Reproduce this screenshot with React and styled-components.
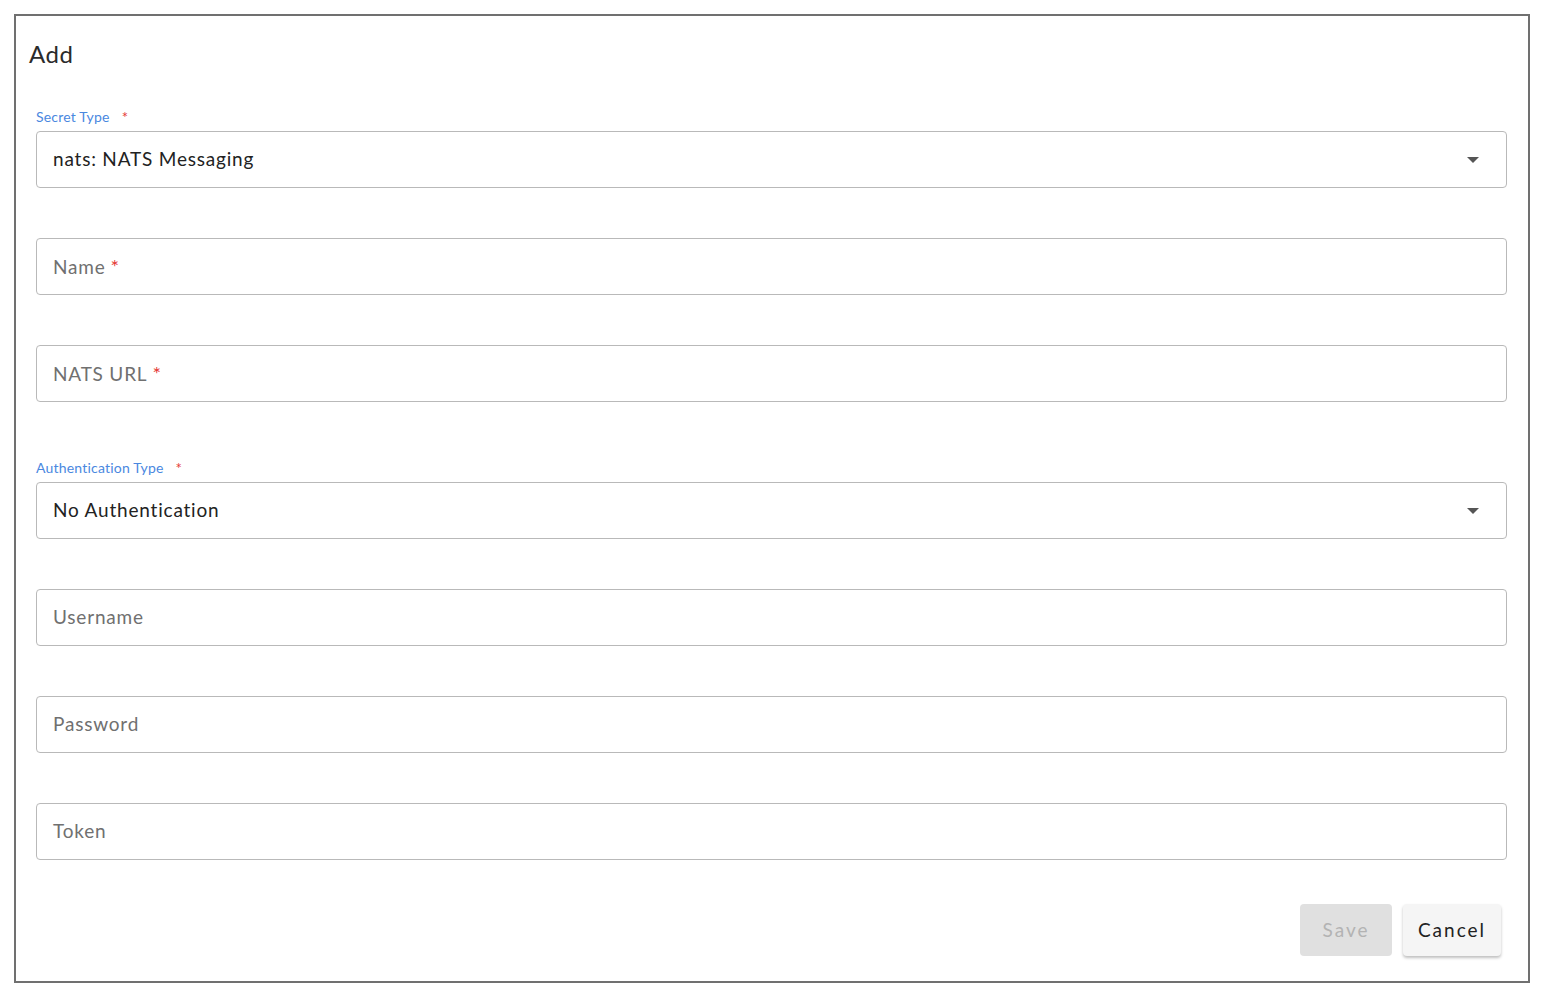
import styled, { createGlobalStyle } from 'styled-components';

const GlobalStyle = createGlobalStyle`
    body {
        margin: 0;
        background: #ffffff;
        font-family: Lato, "Open Sans", sans-serif;
    }
`

const Frame = styled.div`
    margin: 14px 0 0 14px;
    width: 1516px;
    height: 969px;
    box-sizing: border-box;
    border: 2px solid #707070;
    background: #ffffff;
    display: flex;
    flex-direction: column;
`

const Title = styled.h2`
    margin: 23px 0 0 13px;
    font-size: 24px;
    line-height: 30px;
    font-weight: 400;
    letter-spacing: 0.6px;
    color: #2b2b2b;
`

const Form = styled.div`
    display: flex;
    flex-direction: column;
    gap: 50px;
    padding: 32px 21px 0 20px;
`

const Group = styled.div`
    display: flex;
    flex-direction: column;
`

const Label = styled.div`
    margin: 7px 0 5px;
    font-size: 14px;
    line-height: 18px;
    letter-spacing: 0.2px;
    color: #4a88df;
    display: flex;
    gap: 12px;
`

const Star = styled.span`
    color: #e53935;
    font-size: ${p => p.$tight ? '20px' : '15px'};
    margin-left: ${p => p.$tight ? '5px' : '0'};
`

const Box = styled.div`
    height: 57px;
    box-sizing: border-box;
    border: 1px solid #b9b9b9;
    border-radius: 4px;
    display: flex;
    align-items: center;
    justify-content: space-between;
    padding: 0 27px 2px 16px;
    font-size: 19px;
    letter-spacing: 0.8px;
    color: ${p => p.$placeholder ? '#707070' : '#222222'};
`

const Arrow = styled.span`
    width: 0;
    height: 0;
    margin-top: 2px;
    border-left: 6px solid transparent;
    border-right: 6px solid transparent;
    border-top: 6px solid #555555;
`

const Actions = styled.div`
    display: flex;
    justify-content: flex-end;
    gap: 11px;
    padding: 44px 27px 0 0;
`

const Button = styled.button`
    height: 52px;
    min-width: ${p => p.$w}px;
    border: none;
    border-radius: 4px;
    padding: 0 0 2px;
    font-family: inherit;
    font-size: 19px;
    letter-spacing: 2px;
    background: ${p => p.disabled ? '#e0e0e0' : '#f5f5f5'};
    color: ${p => p.disabled ? '#b3b3b3' : '#222222'};
    box-shadow: ${p => p.disabled ? 'none' : '0 2px 3px rgba(0,0,0,0.25)'};
    cursor: pointer;
`

const Select = ({ label, value }) => (
    <Group>
        <Label>{label}<Star>*</Star></Label>
        <Box>{value}<Arrow /></Box>
    </Group>
)

const Input = ({ placeholder, required }) => (
    <Box $placeholder>
        <span>{placeholder}{required && <Star $tight>*</Star>}</span>
    </Box>
)

const App = () => {
    return (
        <>
            <GlobalStyle />
            <Frame>
                <Title>Add</Title>
                <Form>
                    <Select label="Secret Type" value="nats: NATS Messaging" />
                    <Input placeholder="Name" required />
                    <Input placeholder="NATS URL" required />
                    <Select label="Authentication Type" value="No Authentication" />
                    <Input placeholder="Username" />
                    <Input placeholder="Password" />
                    <Input placeholder="Token" />
                </Form>
                <Actions>
                    <Button $w={92} disabled>Save</Button>
                    <Button $w={98}>Cancel</Button>
                </Actions>
            </Frame>
        </>
    )
}

export default App;
